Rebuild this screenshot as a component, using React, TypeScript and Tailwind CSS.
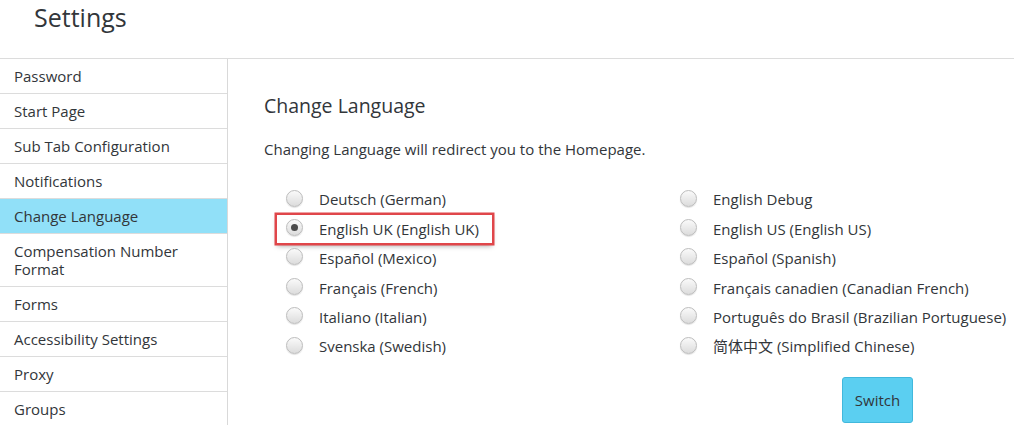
import { useState } from "react";

const menu = [
  "Password",
  "Start Page",
  "Sub Tab Configuration",
  "Notifications",
  "Change Language",
  "Compensation Number Format",
  "Forms",
  "Accessibility Settings",
  "Proxy",
  "Groups",
];

const left = [
  "Deutsch (German)",
  "English UK (English UK)",
  "Español (Mexico)",
  "Français (French)",
  "Italiano (Italian)",
  "Svenska (Swedish)",
];

const right = [
  "English Debug",
  "English US (English US)",
  "Español (Spanish)",
  "Français canadien (Canadian French)",
  "Português do Brasil (Brazilian Portuguese)",
  "简体中文 (Simplified Chinese)",
];

function Radio({ checked }: { checked: boolean }) {
  return (
    <span className="-mt-[3px] flex h-[17px] w-[17px] shrink-0 items-center justify-center rounded-full border border-[#bdbdbd] bg-gradient-to-b from-[#fafafa] to-[#dcdcdc] shadow-[0_1px_1px_rgba(0,0,0,0.12)]">
      {checked && <span className="h-[7px] w-[7px] rounded-full bg-[#4a4a4a]" />}
    </span>
  );
}

function Option({ label, checked, onPick }: { label: string; checked: boolean; onPick: () => void }) {
  return (
    <div className="flex h-[29.4px] items-center">
      <button
        onClick={onPick}
        className={`flex h-[28px] items-center gap-[16px] whitespace-nowrap pl-[9px] pr-[13px] text-left ${
          checked ? "ring-[2.5px] ring-[#e0464a] shadow-[0_3px_5px_rgba(0,0,0,0.35)]" : ""
        }`}
      >
        <Radio checked={checked} />
        <span>{label}</span>
      </button>
    </div>
  );
}

export default function App() {
  const [lang, setLang] = useState("English UK (English UK)");

  return (
    <div className="flex h-[425px] w-[1014px] flex-col overflow-hidden bg-white font-['Open_Sans','Noto_Sans_CJK_SC',sans-serif] text-[15px] text-[#32363a]">
      <header className="h-[59px] shrink-0 border-b border-[#dcdcdc] pl-[34px] pt-[1px]">
        <h1 className="text-[25px] leading-[32px]">Settings</h1>
      </header>

      <div className="flex flex-1">
        <nav className="w-[228px] shrink-0 border-r border-[#d9d9d9]">
          {menu.map((item) => (
            <div
              key={item}
              className={`border-b border-[#dcdcdc] px-[14px] py-[8px] leading-[18px] ${
                item === "Change Language" ? "bg-[#91e0f8]" : ""
              }`}
            >
              {item === "Compensation Number Format" ? (
                <>
                  Compensation Number
                  <br />
                  Format
                </>
              ) : (
                item
              )}
            </div>
          ))}
        </nav>

        <main className="min-w-0 flex-1 pl-[36px] pt-[34px]">
          <h2 className="text-[19.5px] leading-[26px]">Change Language</h2>
          <p className="mt-[20px] leading-[20px]">Changing Language will redirect you to the Homepage.</p>

          <div className="mt-[26px] ml-[13px] grid grid-cols-[394px_auto]">
            <div className="flex flex-col">
              {left.map((l) => (
                <Option key={l} label={l} checked={lang === l} onPick={() => setLang(l)} />
              ))}
            </div>
            <div className="flex flex-col">
              {right.map((l) => (
                <Option key={l} label={l} checked={lang === l} onPick={() => setLang(l)} />
              ))}
            </div>
          </div>

          <button className="ml-[578px] mt-[16px] h-[46px] w-[71px] rounded-[3px] border border-[#41b8dc] bg-[#5bcff1] text-[#32363a]">
            Switch
          </button>
        </main>
      </div>
    </div>
  );
}
